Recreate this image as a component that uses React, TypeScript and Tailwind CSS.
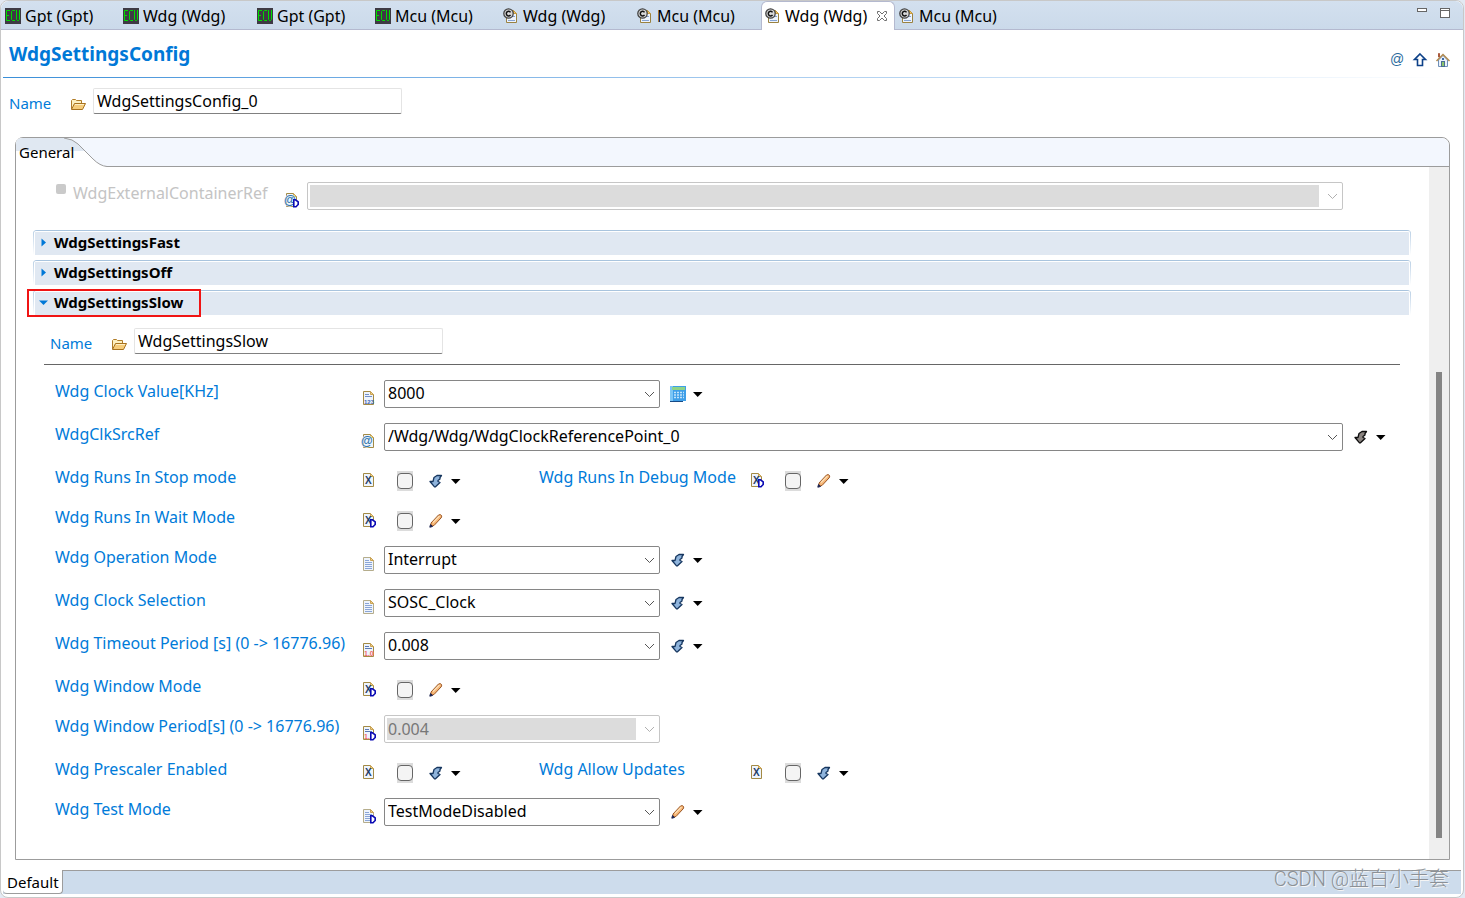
import { useState, type ReactNode } from "react";
import clsx from "clsx";

type Kind = "plain" | "int" | "float" | "bool" | "ref";
type Tool = "arrow" | "arrowDark" | "pencil" | "calc";

/* ---------- icons ---------- */

function EcuIcon() {
  return (
    <svg width="16" height="16" viewBox="0 0 16 16" className="shrink-0" aria-hidden="true">
      <rect width="16" height="16" fill="#3e3a44" />
      <g fill="none" stroke="#00dc00" strokeWidth="1">
        <path d="M5 2.500H1.500V12.500H5M1.500 7.500H4" />
        <path d="M10 2.500H7.500L6.500 3.500V11.500L7.500 12.500H10" />
        <path d="M11.500 2V11.500L12.500 12.500H13.500L14.500 11.500V2" />
      </g>
    </svg>
  );
}

function ConfigIcon() {
  return (
    <svg width="16" height="16" viewBox="0 0 16 16" className="shrink-0" aria-hidden="true">
      <path d="M4.500 2.500H10.500L13.500 5.500V14.500H3.500V9" fill="#eef4fd" stroke="#9a8240" />
      <path d="M10.500 2.500V5.500H13.500Z" fill="#f0c870" stroke="#c79a3c" />
      <path d="M9 8.500H12M5 12.500H12" stroke="#86a4d4" />
      <circle cx="5.500" cy="5.500" r="4.700" fill="#d8d8d8" stroke="#444" strokeWidth="1.300" />
      <path d="M7.500 4.300A2.300 2.300 0 1 0 7.500 6.900" fill="none" stroke="#111" strokeWidth="1.500" />
    </svg>
  );
}

function FolderIcon() {
  return (
    <svg width="16" height="16" viewBox="0 0 16 16" className="shrink-0" aria-hidden="true">
      <path d="M1.500 13V4.500L2.500 3.500H5.500L6.500 4.500H11.500V7.500" fill="#fdf0c0" stroke="#b07c28" />
      <path d="M1.500 13.500L4.500 7.500H15.500L12.500 13.500Z" fill="#f6cd7c" stroke="#a8721f" strokeLinejoin="round" />
      <path d="M5 8.500H14" stroke="#fff0c4" />
    </svg>
  );
}

function KindIcon({ kind, isDefault }: { kind: Kind; isDefault?: boolean }) {
  const soft = kind === "plain";
  return (
    <svg width="16" height="16" viewBox="0 0 16 16" className="shrink-0 overflow-visible" aria-hidden="true">
      <path
        d="M2.500 1.500H9.500L12.500 4.500V14.500H2.500Z"
        fill="#eef4fd"
        stroke={soft ? "#b5ad8c" : "#a38a45"}
      />
      <path d="M9.500 1.500V4.500H12.500Z" fill="#f0cf85" stroke="#c9a356" />
      {soft && <path d="M4 4.500H8M4 6.500H11M4 8.500H11M4 10.500H11M4 12.500H11" stroke="#8aa5d6" />}
      {kind === "int" && (
        <>
          <path d="M4 4.500H8M4 6.500H11" stroke="#7290c8" />
          <text x="3" y="14" fontSize="6" fontWeight="700" fill="#3d67b5" className="font-['Liberation_Sans',sans-serif]">123</text>
        </>
      )}
      {kind === "float" && (
        <>
          <path d="M4 4.500H8M4 6.500H11" stroke="#5b79b4" />
          <text x="3" y="14" fontSize="7" fontWeight="700" fill="#f26a6a" className="font-['Liberation_Sans',sans-serif]">
            {isDefault ? "1." : "1.0"}
          </text>
        </>
      )}
      {kind === "bool" && (
        <text x="4" y="12" fontSize="10" fontWeight="700" fill="#1f3d66" className="font-['Liberation_Sans',sans-serif]">X</text>
      )}
      {kind === "ref" && (
        <text x="0" y="12" fontSize="12" fontWeight="700" fill="#2f74ad" stroke="#eef4fd" strokeWidth="1" paintOrder="stroke" className="font-['Liberation_Sans',sans-serif]">@</text>
      )}
      {isDefault && (
        <path d="M9.800 7.800H11.500L14.200 10V12.500L12 14.700H9.800Z" fill="#fff" stroke="#0a0ab4" strokeWidth="1.600" />
      )}
    </svg>
  );
}

function ToolIcon({ tool }: { tool: Tool }) {
  if (tool === "calc") {
    return (
      <svg width="16" height="16" viewBox="0 0 16 16" className="shrink-0" aria-hidden="true">
        <rect width="16" height="15" fill="#3f9fe8" />
        <rect width="3" height="15" fill="#7cc6f6" />
        <rect x="2" y="1" width="13" height="3" fill="#8ed488" />
        <path d="M4 6.500H14M4 9H14M4 11.500H14" stroke="#c4e4fa" strokeWidth="1.500" strokeDasharray="2 1" />
        <path d="M0 15.500H13" stroke="#174a86" />
      </svg>
    );
  }
  if (tool === "pencil") {
    return (
      <svg width="16" height="16" viewBox="0 0 16 16" className="shrink-0" aria-hidden="true">
        <path d="M3 10L10.500 2Q12.500 1 13.500 2.500Q14 4 13 5L6 12.500L3 13Z" fill="#f7b777" stroke="#9a5523" />
        <path d="M5 9.500L11.500 3" stroke="#fde0b8" strokeWidth="1.300" />
        <path d="M1.800 14.200L2.500 11.500L4.500 13.500Z" fill="#1c2350" stroke="#1c2350" />
      </svg>
    );
  }
  const dark = tool === "arrowDark";
  return (
    <svg width="16" height="16" viewBox="0 0 16 16" className="shrink-0" aria-hidden="true">
      <path
        d="M13.500 2.500H9L6 4.500L5 8.500H2L6.500 13.800H7.500L12 9.500L10 8.500V7.500L12 6V4.500Z"
        fill={dark ? "#8a8480" : "#8fb4dc"}
        stroke={dark ? "#0c0c0c" : "#16365f"}
        strokeWidth="1.300"
        strokeLinejoin="round"
      />
    </svg>
  );
}

function CloseIcon() {
  return (
    <svg width="12" height="12" viewBox="0 0 12 12" aria-hidden="true">
      <path
        d="M1.500 1.500H3.500L6 4L8.500 1.500H10.500V3.500L8 6L10.500 8.500V10.500H8.500L6 8L3.500 10.500H1.500V8.500L4 6L1.500 3.500Z"
        fill="#fff"
        stroke="#6e6e6e"
      />
    </svg>
  );
}

function AtIcon() {
  return (
    <svg width="16" height="16" viewBox="0 0 16 16" aria-hidden="true">
      <text x="1" y="12" fontSize="14" fill="#2a6a9c" className="font-['Liberation_Sans',sans-serif]">@</text>
    </svg>
  );
}

function UpIcon() {
  return (
    <svg width="16" height="16" viewBox="0 0 16 16" aria-hidden="true">
      <path d="M8 2L13.500 7.500H10.500V13.500H5.500V7.500H2.500Z" fill="#fff" stroke="#0d4188" strokeWidth="1.600" />
    </svg>
  );
}

function HomeIcon() {
  return (
    <svg width="16" height="16" viewBox="0 0 16 16" aria-hidden="true">
      <path d="M3.500 1.500H4.500V5H3.500Z" fill="#c4684a" stroke="#a8583c" />
      <path d="M3.500 8L8 3.500L12.500 8V14.500H3.500Z" fill="#eaf1fb" stroke="#6f90b8" />
      <path d="M1.500 9L8 2.500L14.500 9" fill="none" stroke="#b08a50" strokeWidth="1.500" />
      <rect x="7" y="6" width="2" height="2" fill="#3c6ba8" />
      <rect x="6.500" y="9.500" width="3" height="5" fill="#8cc46c" stroke="#4a6d96" />
    </svg>
  );
}

/* ---------- small controls ---------- */

function ToolButton({ tool, label }: { tool: Tool; label: string }) {
  return (
    <button type="button" aria-label={label} className="flex h-5 items-center gap-1.5">
      <ToolIcon tool={tool} />
      <svg width="12" height="8" viewBox="0 0 12 8" aria-hidden="true">
        <path d="M1 2H10.500L5.700 7Z" fill="#000" />
      </svg>
    </button>
  );
}

interface ComboProps {
  id: string;
  value?: string;
  disabled?: boolean;
  className?: string;
}

function Combo({ id, value = "", disabled, className }: ComboProps) {
  return (
    <div
      className={clsx(
        "relative h-7 rounded-xs border bg-white",
        disabled ? "border-[#c6c6c6] p-0.5 pr-[23px]" : "border-[#868686]",
        className
      )}
    >
      <select
        id={id}
        disabled={disabled}
        defaultValue={value}
        className={clsx(
          "block h-full w-full appearance-none pb-0.5 outline-none",
          disabled ? "bg-[#dcdcdc] pl-px text-[#777]" : "bg-transparent pl-[3px] text-black"
        )}
      >
        <option value={value}>{value}</option>
      </select>
      <svg width="11" height="7" viewBox="0 0 11 7" className="pointer-events-none absolute top-[10px] right-1" aria-hidden="true">
        <path d="M1 1L5.500 5.500L10 1" fill="none" stroke={disabled ? "#b0b0b0" : "#555"} />
      </svg>
    </div>
  );
}

function NameField({ id, value }: { id: string; value: string }) {
  return (
    <div className="flex h-[26px] items-center">
      <label htmlFor={id} className="w-[61px] pt-1 text-[15px] text-[#007bd9]">
        Name
      </label>
      <div className="w-[23px] pt-1.5">
        <FolderIcon />
      </div>
      <input
        id={id}
        type="text"
        defaultValue={value}
        className="h-[26px] w-[309px] rounded-xs border border-[#e4e4e4] border-b-[#808080] px-[3px] outline-none"
      />
    </div>
  );
}

interface CheckProps {
  id: string;
  label: string;
  tool: Tool;
  isDefault?: boolean;
  narrow?: boolean;
}

function CheckField({ id, label, tool, isDefault, narrow }: CheckProps) {
  return (
    <div className={clsx("flex h-[25px]", narrow ? "w-[388px]" : "w-[484px]")}>
      <label
        htmlFor={id}
        className={clsx("shrink-0 whitespace-nowrap text-[#007bd9]", narrow ? "w-[210px]" : "w-[306px]")}
      >
        {label}
      </label>
      <div className="flex grow items-end pb-[3px]">
        <KindIcon kind="bool" isDefault={isDefault} />
      </div>
      <div className="flex w-[142px] items-end gap-[15px]">
        <span className="flex h-5 w-4 items-center bg-[#dcdcdc]">
          <input
            id={id}
            type="checkbox"
            className="size-4 appearance-none rounded border border-[#666] bg-[#f4f4f4] checked:bg-[#0078d7]"
          />
        </span>
        <ToolButton tool={tool} label={`${label} options`} />
      </div>
    </div>
  );
}

interface ComboFieldProps {
  id: string;
  label: string;
  kind: Kind;
  value: string;
  tool?: Tool;
  isDefault?: boolean;
  disabled?: boolean;
  wide?: boolean;
}

function ComboField({ id, label, kind, value, tool, isDefault, disabled, wide }: ComboFieldProps) {
  return (
    <div className="flex h-7">
      <label htmlFor={id} className="w-[306px] shrink-0 whitespace-nowrap text-[#007bd9]">
        {label}
      </label>
      <div className="flex w-[23px] shrink-0 items-end pb-0.5">
        <KindIcon kind={kind} isDefault={isDefault} />
      </div>
      <Combo id={id} value={value} disabled={disabled} className={wide ? "min-w-0 flex-1" : "w-[276px]"} />
      <div className={clsx("flex items-center pl-2.5", wide && "w-[86px]")}>
        {tool && <ToolButton tool={tool} label={`${label} options`} />}
      </div>
    </div>
  );
}

interface SectionHeaderProps {
  title: string;
  open?: boolean;
  onToggle: () => void;
  children?: ReactNode;
}

function SectionHeader({ title, open, onToggle, children }: SectionHeaderProps) {
  return (
    <div className="relative h-[25px] rounded-t-sm border-t border-[#a9c4de] bg-linear-to-b from-[#b9cfe5] to-white px-px">
      <div className="h-6 rounded-t-xs border-x border-t border-white bg-[#e0e8f2]">
        <button
          type="button"
          aria-expanded={!!open}
          onClick={onToggle}
          className="flex h-5 items-center gap-1.5 pl-1 text-[15px] font-bold"
        >
          <svg width="9" height="9" viewBox="0 0 9 9" aria-hidden="true">
            {open ? <path d="M0 2.500H9L4.500 7Z" fill="#0078d7" /> : <path d="M2.500 0.500L7 4.500L2.500 8.500Z" fill="#0078d7" />}
          </svg>
          {title}
        </button>
      </div>
      {children}
    </div>
  );
}

/* ---------- page ---------- */

const tabs = [
  { name: "Gpt (Gpt)", ecu: true, width: "w-[118px]" },
  { name: "Wdg (Wdg)", ecu: true, width: "w-[134px]" },
  { name: "Gpt (Gpt)", ecu: true, width: "w-[118px]" },
  { name: "Mcu (Mcu)", ecu: true, width: "w-[128px]" },
  { name: "Wdg (Wdg)", ecu: false, width: "w-[134px]" },
  { name: "Mcu (Mcu)", ecu: false, width: "w-[128px]" },
  { name: "Wdg (Wdg)", ecu: false, width: "w-[134px]" },
  { name: "Mcu (Mcu)", ecu: false, width: "w-[128px]" },
];

function EditorTabs() {
  const [active, setActive] = useState(6);
  return (
    <div className="flex h-[29px] justify-between rounded-t-lg border-b border-[#b4b9cf] bg-linear-to-b from-[#d3e0ef] to-[#cbdaea]">
      <div role="tablist" className="flex h-[29px]">
        {tabs.map((tab, i) => (
          <div
            key={i}
            className={clsx(
              "flex shrink-0 items-center rounded-t-md border-x",
              tab.width,
              i === active ? "border-t border-[#b4b9cf] bg-white" : "border-transparent"
            )}
          >
            <button
              type="button"
              role="tab"
              aria-selected={i === active}
              onClick={() => setActive(i)}
              className="flex items-center gap-1 pl-[3px] whitespace-nowrap"
            >
              {tab.ecu ? <EcuIcon /> : <ConfigIcon />}
              <span>{tab.name}</span>
            </button>
            {i === active && (
              <button type="button" aria-label="Close" className="ml-auto pr-1.5">
                <CloseIcon />
              </button>
            )}
          </div>
        ))}
      </div>
      <div className="flex gap-[13px] pt-[7px] pr-[13px]">
        <button type="button" aria-label="Minimize" className="h-1 w-2.5 border border-[#666] bg-white" />
        <button type="button" aria-label="Maximize" className="flex h-2.5 w-2.5 flex-col border border-[#666] bg-white pt-px">
          <span className="h-px w-full bg-[#666]" />
        </button>
      </div>
    </div>
  );
}

export default function App() {
  const [open, setOpen] = useState({ fast: false, off: false, slow: true });
  const toggle = (key: keyof typeof open) => setOpen({ ...open, [key]: !open[key] });

  return (
    <div className="bg-[#e3e9f3] font-['Noto_Sans','Noto_Sans_CJK_SC',sans-serif] text-base leading-[22px] text-black">
      <div className="relative mr-px flex min-h-screen flex-col rounded-lg border border-[#c8c8c8] bg-white">
        <EditorTabs />

        {/* Form title */}
        <header className="ml-0.5 flex h-[47px] items-center justify-between pr-3 pl-1.5">
          <h1 className="text-[19px] font-bold text-[#0078d7]">WdgSettingsConfig</h1>
          <div className="flex gap-[7px] pt-3">
            <button type="button" aria-label="References"><AtIcon /></button>
            <button type="button" aria-label="Up"><UpIcon /></button>
            <button type="button" aria-label="Home"><HomeIcon /></button>
          </div>
        </header>
        <div className="mr-5 ml-0.5 h-px bg-linear-to-r from-[#3a8fd8] to-white" />

        <div className="pt-2.5 pb-[23px] pl-2">
          <NameField id="config-name" value="WdgSettingsConfig_0" />
        </div>

        {/* General page */}
        <section className="mr-[13px] ml-3.5 flex flex-1 flex-col rounded-t-lg border border-[#9c9c9c]">
          <div className="relative flex h-[29px] rounded-t-lg border-b border-[#9c9c9c] bg-[#f3f7fe]">
            <svg width="92" height="29" viewBox="0 0 92 29" className="absolute top-0 left-0" aria-hidden="true">
              <path d="M0 29V6Q0 0 6 0H48Q57 1 62 6L77 21Q84 28 91 28.500V29Z" fill="#fff" />
              <path d="M0 13V6Q0 0 6 0H48Q57 1 62 6L69 13Z" fill="#e0e8f2" />
              <path d="M48 0Q57 1 62 6L77 21Q84 28 91 28.500" fill="none" stroke="#9c9c9c" />
            </svg>
            <button type="button" role="tab" aria-selected="true" className="relative pl-[3px] text-[15px]">
              General
            </button>
          </div>

          <div className="flex flex-1">
            <div className="min-w-0 flex-1 pt-[15px] pb-6">
              <div className="flex h-7 pl-10">
                <input
                  id="ext-enable"
                  type="checkbox"
                  disabled
                  className="mt-0.5 mr-[7px] size-2.5 appearance-none rounded-xs bg-[#cacaca]"
                />
                <label htmlFor="ext-enable" className="w-[211px] text-[#c4c4c4]">
                  WdgExternalContainerRef
                </label>
                <label htmlFor="ext-ref" aria-label="WdgExternalContainerRef" className="flex w-[23px] items-end pb-0.5">
                  <KindIcon kind="ref" isDefault />
                </label>
                <Combo id="ext-ref" disabled className="mr-[86px] min-w-0 flex-1" />
              </div>

              <div className="mt-5 mr-[18px] ml-[17px] flex flex-col gap-[5px]">
                <SectionHeader title="WdgSettingsFast" open={open.fast} onToggle={() => toggle("fast")} />
                <SectionHeader title="WdgSettingsOff" open={open.off} onToggle={() => toggle("off")} />
                <SectionHeader title="WdgSettingsSlow" open={open.slow} onToggle={() => toggle("slow")}>
                  <div className="pointer-events-none absolute -top-0.5 -left-1.5 h-7 w-[174px] border-2 border-[#f01414]" />
                </SectionHeader>
              </div>

              {open.slow && (
                <>
                  <div className="mt-[13px] pl-[34px]">
                    <NameField id="slow-name" value="WdgSettingsSlow" />
                  </div>
                  <hr className="mt-2.5 mr-[29px] ml-7 border-[#666]" />
                  <div className="mt-[15px] flex flex-col gap-[15px] pl-[39px]">
                    <ComboField id="clock-value" label="Wdg Clock Value[KHz]" kind="int" value="8000" tool="calc" />
                    <ComboField id="clk-src" label="WdgClkSrcRef" kind="ref" value="/Wdg/Wdg/WdgClockReferencePoint_0" tool="arrowDark" wide />
                    <div className="flex">
                      <CheckField id="stop-mode" label="Wdg Runs In Stop mode" tool="arrow" />
                      <CheckField id="debug-mode" label="Wdg Runs In Debug Mode" tool="pencil" isDefault narrow />
                    </div>
                    <CheckField id="wait-mode" label="Wdg Runs In Wait Mode" tool="pencil" isDefault />
                    <ComboField id="operation" label="Wdg Operation Mode" kind="plain" value="Interrupt" tool="arrow" />
                    <ComboField id="clock-sel" label="Wdg Clock Selection" kind="plain" value="SOSC_Clock" tool="arrow" />
                    <ComboField id="timeout" label="Wdg Timeout Period [s] (0 -> 16776.96)" kind="float" value="0.008" tool="arrow" />
                    <CheckField id="window-mode" label="Wdg Window Mode" tool="pencil" isDefault />
                    <ComboField id="window-period" label="Wdg Window Period[s] (0 -> 16776.96)" kind="float" value="0.004" isDefault disabled />
                    <div className="flex">
                      <CheckField id="prescaler" label="Wdg Prescaler Enabled" tool="arrow" />
                      <CheckField id="updates" label="Wdg Allow Updates" tool="arrow" narrow />
                    </div>
                    <ComboField id="test-mode" label="Wdg Test Mode" kind="plain" value="TestModeDisabled" tool="pencil" isDefault />
                  </div>
                </>
              )}
            </div>

            {/* Scroll bar */}
            <div className="flex w-5 flex-col items-center bg-[#efefef] pt-[205px] pb-[21px]">
              <div className="w-1.5 flex-1 bg-[#858585]" />
            </div>
          </div>
        </section>

        {/* Page tabs */}
        <footer className="mt-2.5 mr-0.5 mb-[3px] ml-0.5 flex h-6 border-t border-[#9c9c9c] bg-[#cddcec]">
          <button
            type="button"
            className="-mt-px h-6 rounded-b-sm border-r border-b border-[#9c9c9c] bg-white pr-[3px] pl-1 text-[15px]"
          >
            Default
          </button>
        </footer>
        <div className="pointer-events-none absolute right-3.5 bottom-1 font-['Roboto','Noto_Sans_CJK_SC',sans-serif] text-xl leading-7 font-light text-[#8b9096] text-shadow-[1px_1px_0_#f4f4f4]">
          CSDN @蓝白小手套
        </div>
      </div>
    </div>
  );
}
